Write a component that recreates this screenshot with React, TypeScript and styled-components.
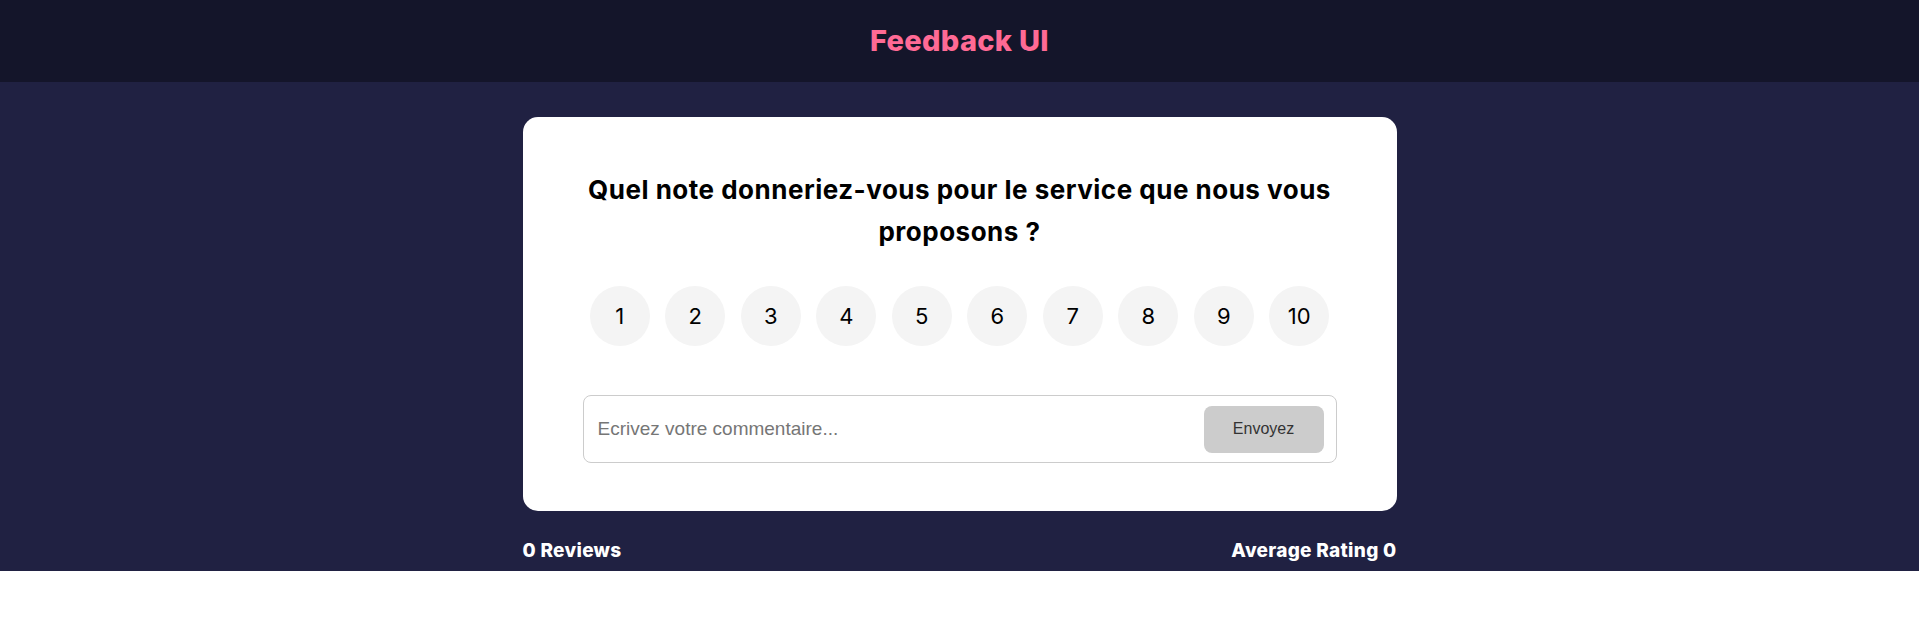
import React, { useState } from "react";
import styled, { createGlobalStyle } from "styled-components";

const GlobalStyle = createGlobalStyle`
  * { box-sizing: border-box; }
  html, body { margin: 0; padding: 0; background: #ffffff; }
  body { font-family: "Inter", "Liberation Sans", sans-serif; }
`;

const Page = styled.div`
  background: #202142;
  display: flex;
  flex-direction: column;
  padding-bottom: 9px;
`;

const Header = styled.header`
  height: 82px;
  background: #14152a;
  display: flex;
  align-items: center;
  justify-content: center;
`;

const Title = styled.h1`
  margin: 0;
  font-family: "Inter", sans-serif;
  font-weight: 800;
  font-size: 29px;
  letter-spacing: 0.3px;
  color: #ff6a95;
  padding-bottom: 2px;
`;

const Main = styled.main`
  width: 874px;
  margin: 35px auto 0;
  display: flex;
  flex-direction: column;
`;

const Card = styled.section`
  background: #ffffff;
  border-radius: 15px;
  padding: 52px 60px 48px;
  display: flex;
  flex-direction: column;
  align-items: stretch;
`;

const Question = styled.h2`
  margin: 0;
  text-align: center;
  font-family: "Inter", sans-serif;
  font-weight: 700;
  font-size: 26px;
  letter-spacing: 0.5px;
  line-height: 42px;
  color: #000000;
`;

const RatingList = styled.ul`
  list-style: none;
  margin: 33px 0 0;
  padding: 0;
  display: flex;
  justify-content: center;
  gap: 15.5px;
`;

const RatingItem = styled.li<{ $active: boolean }>`
  width: 60px;
  height: 60px;
  border-radius: 50%;
  background: ${(p) => (p.$active ? "#ff6a95" : "#f4f4f4")};
  color: ${(p) => (p.$active ? "#ffffff" : "#000000")};
  display: flex;
  align-items: center;
  justify-content: center;
  font-family: "Inter", sans-serif;
  font-weight: 400;
  font-size: 22px;
  cursor: pointer;
`;

const Form = styled.form`
  margin-top: 49px;
  height: 68px;
  border: 1px solid #cccccc;
  border-radius: 8px;
  display: flex;
  align-items: center;
  padding: 0 12px 0 14px;
  gap: 10px;
`;

const Input = styled.input`
  flex: 1;
  border: none;
  outline: none;
  font-family: "Liberation Sans", Arial, sans-serif;
  font-size: 19px;
  color: #333;
  background: transparent;
  padding: 0;
  &::placeholder { color: #767676; }
`;

const SendButton = styled.button`
  width: 120px;
  height: 47px;
  border: none;
  border-radius: 8px;
  background: #cccccc;
  color: #333333;
  font-family: "Liberation Sans", Arial, sans-serif;
  font-size: 16px;
  cursor: pointer;
`;

const Stats = styled.div`
  margin-top: 27px;
  display: flex;
  justify-content: space-between;
  align-items: center;
  height: 24px;
`;

const StatText = styled.h4`
  margin: 0;
  color: #ffffff;
  font-family: "Inter", sans-serif;
  font-weight: 800;
  font-size: 19px;
  letter-spacing: 0.3px;
`;

export default function App() {
  const [selected, setSelected] = useState<number | null>(null);
  return (
    <>
      <GlobalStyle />
      <Page>
        <Header>
          <Title>Feedback UI</Title>
        </Header>
        <Main>
          <Card>
            <Question>
              Quel note donneriez-vous pour le service que nous vous proposons ?
            </Question>
            <RatingList>
              {Array.from({ length: 10 }, (_, i) => i + 1).map((n) => (
                <RatingItem key={n} $active={selected === n} onClick={() => setSelected(n)}>
                  {n}
                </RatingItem>
              ))}
            </RatingList>
            <Form onSubmit={(e) => e.preventDefault()}>
              <Input type="text" placeholder="Ecrivez votre commentaire..." />
              <SendButton type="submit">Envoyez</SendButton>
            </Form>
          </Card>
          <Stats>
            <StatText>0 Reviews</StatText>
            <StatText>Average Rating 0</StatText>
          </Stats>
        </Main>
      </Page>
    </>
  );
}
